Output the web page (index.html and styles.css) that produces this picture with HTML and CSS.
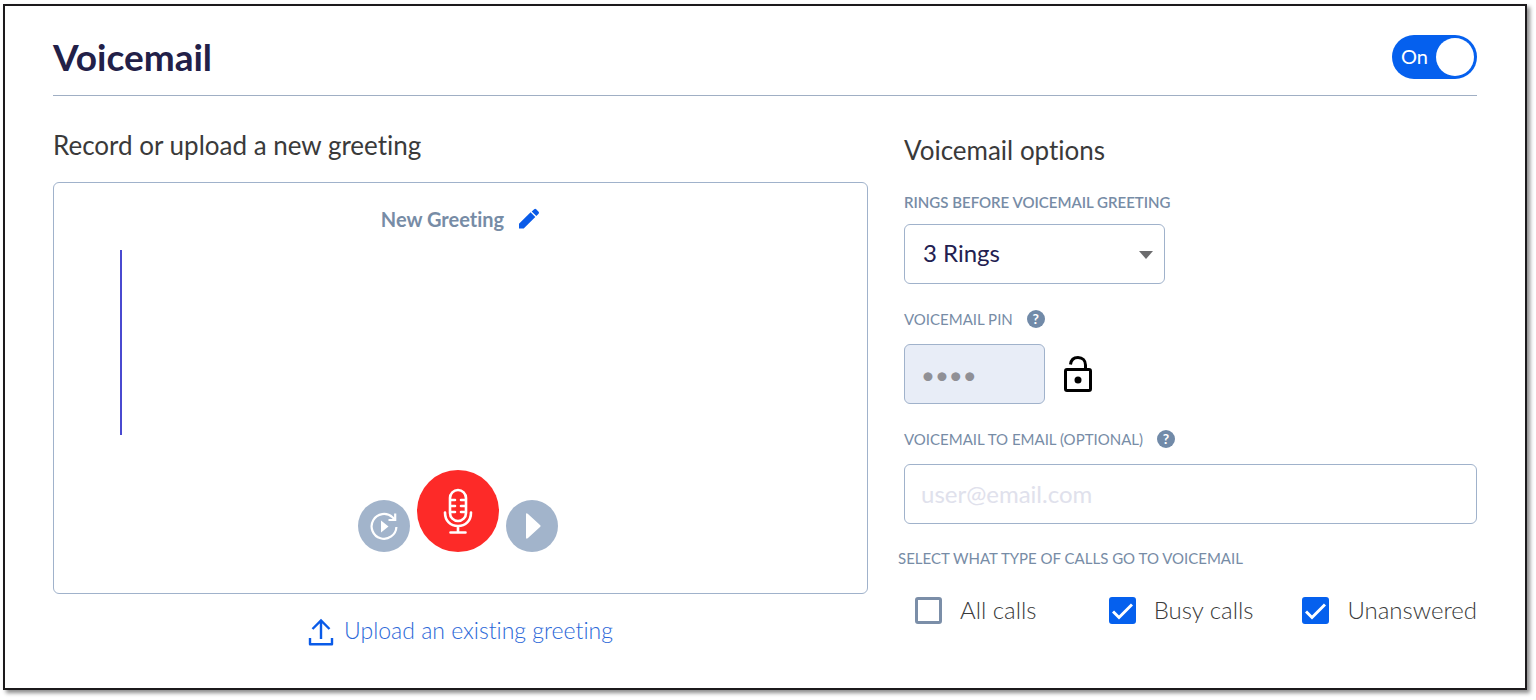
FILE: index.html
```html
<!DOCTYPE html>
<html lang="en">
<head>
<meta charset="utf-8">
<meta name="viewport" content="width=device-width, initial-scale=1">
<title>Voicemail</title>
<link rel="stylesheet" href="styles.css">
</head>
<body>
<main class="panel">
  <header class="panel-header">
    <h1 class="title">Voicemail</h1>
    <label class="toggle">
      <input class="toggle-input" type="checkbox" role="switch" aria-label="Voicemail" checked>
      <span class="toggle-text">On</span>
      <span class="toggle-knob"></span>
    </label>
  </header>

  <div class="columns">
    <section class="greeting">
      <h2 class="section-title">Record or upload a new greeting</h2>
      <div class="recorder">
        <div class="recorder-name">
          <span>New Greeting</span>
          <button class="icon-button" type="button" aria-label="Rename greeting">
            <svg width="22" height="22" viewBox="0 0 22 22" fill="#0a5be8"><path d="M1 15.800V20.500h4.700L17.300 9l-4.700-4.700zM18.300 8l2.300-2.300a1.500 1.500 0 0 0 0-2L18.200 1.300a1.500 1.500 0 0 0-2 0L13.700 3.400z"/></svg>
          </button>
        </div>
        <div class="waveform"></div>
        <div class="controls">
          <button class="round" type="button" aria-label="Replay">
            <svg width="30" height="30" viewBox="0 0 30 30" fill="none" stroke="#fff" stroke-width="2.200"><path d="M27.400 16A12.400 12.400 0 1 1 23.500 6.300L26 8.800"/><path d="M26.200 2.500V9H19.500"/><path d="M12 9.500l7.500 6-7.500 6z" fill="#fff" stroke="none"/></svg>
          </button>
          <button class="round round-record" type="button" aria-label="Record">
            <svg width="30" height="46" viewBox="0 0 30 46" fill="none" stroke="#fff" stroke-width="2.600" stroke-linecap="round"><rect x="7" y="2" width="16" height="31" rx="8"/><path d="M2 24.500C2 33 7.500 38 15 38s13-5 13-13.500M15 38v6M7.500 44.500h15"/><path d="M8 12h4M8 18h4M8 24h4M18 12h4M18 18h4M18 24h4"/></svg>
          </button>
          <button class="round" type="button" aria-label="Play">
            <svg width="18" height="28" viewBox="0 0 18 28" fill="#fff"><path d="M3 2.500Q3 .5 5 2L17 13q1.200 1 0 2L5 26Q3 27.500 3 25.500z"/></svg>
          </button>
        </div>
      </div>
      <a class="upload" href="#">
        <svg width="26" height="32" viewBox="0 0 26 32" fill="none" stroke="#0a5be8" stroke-width="2.400"><path d="M13 25V6.500M4.500 15L13 6.500 21.500 15"/><path d="M2 24v6.300h22V24" stroke-linejoin="round"/></svg>
        <span>Upload an existing greeting</span>
      </a>
    </section>

    <section class="options">
      <h2 class="section-title">Voicemail options</h2>

      <div class="field">
        <label class="field-label field-label-strong" for="rings">RINGS BEFORE VOICEMAIL GREETING</label>
        <div class="select-wrap">
          <select class="control select" id="rings">
            <option>3 Rings</option>
            <option>4 Rings</option>
            <option>5 Rings</option>
          </select>
          <svg class="select-arrow" width="14" height="8" viewBox="0 0 14 8" fill="#6c6c6e"><path d="M0 0h14L7 8z"/></svg>
        </div>
      </div>

      <div class="field">
        <div class="label-row">
          <label class="field-label" for="pin">VOICEMAIL PIN</label>
          <button class="help" type="button" aria-label="About the PIN">?</button>
        </div>
        <div class="pin-row">
          <input class="control pin" id="pin" type="password" value="1234" readonly>
          <button class="icon-button" type="button" aria-label="Unlock PIN">
            <svg width="30" height="38" viewBox="0 0 30 38" fill="none" stroke="#000" stroke-width="3"><rect x="2.500" y="14.500" width="25" height="21" rx="1.500"/><path d="M7.500 9.500C8 5 11 2.500 15 2.500c4.500 0 7.500 3 7.500 7.500v4.500"/><circle cx="15" cy="25" r="3.500" fill="#000" stroke="none"/></svg>
          </button>
        </div>
      </div>

      <div class="field">
        <div class="label-row">
          <label class="field-label" for="email">VOICEMAIL TO EMAIL (OPTIONAL)</label>
          <button class="help" type="button" aria-label="About voicemail to email">?</button>
        </div>
        <input class="control email" id="email" type="email" placeholder="user@email.com">
      </div>

      <fieldset class="calls">
        <legend class="field-label calls-legend">SELECT WHAT TYPE OF CALLS GO TO VOICEMAIL</legend>
        <div class="checks">
          <label class="check"><input class="check-box" type="checkbox"><span>All calls</span></label>
          <label class="check"><input class="check-box" type="checkbox" checked><span>Busy calls</span></label>
          <label class="check"><input class="check-box" type="checkbox" checked><span>Unanswered</span></label>
        </div>
      </fieldset>
    </section>
  </div>
</main>
</body>
</html>
```

FILE: styles.css
```css
* {
  box-sizing: border-box;
}

body {
  margin: 0;
  padding: 4px 9px 10px 3px;
  background: #fff;
  color: #3a3a3a;
  font-family: Lato, "Liberation Sans", sans-serif;
  font-variant-ligatures: none;
}

button,
input,
select {
  margin: 0;
  font-family: inherit;
}

svg {
  display: block;
}

.panel {
  padding: 29px 48px 42px;
  border: 2px solid #1c1a1c;
  background: #fff;
  box-shadow: 3px 3px 4px rgba(0, 0, 0, 0.45);
}

.panel-header {
  display: flex;
  align-items: center;
  justify-content: space-between;
  padding-bottom: 16px;
  border-bottom: 1px solid #a0afc4;
}

.title {
  margin: 0;
  color: #222048;
  font-size: 37px;
  line-height: 44px;
  font-weight: 700;
}

.toggle {
  position: relative;
  display: flex;
  align-items: center;
  justify-content: space-between;
  width: 85px;
  height: 44px;
  padding: 0 3px 0 9px;
  border-radius: 22px;
  background: #0560ee;
  color: #fff;
  font-size: 20px;
  cursor: pointer;
}

.toggle-input {
  position: absolute;
  inset: 0;
  width: 100%;
  height: 100%;
  margin: 0;
  opacity: 0;
}

.toggle-text {
  padding-bottom: 2px;
}

.toggle-knob {
  width: 38px;
  height: 38px;
  border-radius: 50%;
  background: #fff;
}

.columns {
  display: grid;
  grid-template-columns: 815fr 573fr;
  gap: 36px;
}

.greeting {
  padding-top: 33px;
}

.options {
  padding-top: 38px;
}

.section-title {
  margin: 0;
  font-size: 26px;
  line-height: 32px;
  font-weight: 400;
}

.recorder {
  display: flex;
  flex-direction: column;
  margin-top: 21px;
  padding: 24px 66px 41px;
  border: 1px solid #a0b2cb;
  border-radius: 6px;
}

.recorder-name {
  display: flex;
  align-items: center;
  justify-content: center;
  gap: 14px;
  color: #778ca6;
  font-size: 20px;
  line-height: 24px;
  font-weight: 700;
}

.icon-button {
  padding: 0;
  border: 0;
  background: none;
  cursor: pointer;
}

.waveform {
  height: 185px;
  margin-top: 19px;
  border-left: 2px solid #4a4ad0;
}

.controls {
  display: flex;
  align-items: flex-end;
  justify-content: center;
  gap: 7px;
  margin-top: 35px;
  padding-right: 6px;
}

.round {
  display: flex;
  align-items: center;
  justify-content: center;
  width: 52px;
  height: 52px;
  padding: 0;
  border: 0;
  border-radius: 50%;
  background: #a2b4cb;
  cursor: pointer;
}

.round-record {
  width: 82px;
  height: 82px;
  background: #fd2a28;
}

.upload {
  display: flex;
  align-items: center;
  justify-content: center;
  gap: 10px;
  margin-top: 20px;
  color: #2b68d8;
  font-size: 23px;
  line-height: 32px;
  font-weight: 300;
  text-decoration: none;
}

.field-label {
  color: #778ca6;
  font-size: 15px;
  line-height: 20px;
}

.field-label-strong {
  font-weight: 600;
}

.field {
  display: flex;
  flex-direction: column;
  gap: 12px;
  margin-top: 26px;
}

.field + .field {
  gap: 15px;
  margin-top: 25px;
}

.label-row {
  display: flex;
  align-items: center;
  gap: 14px;
}

.help {
  width: 18px;
  height: 18px;
  padding: 0;
  border: 0;
  border-radius: 50%;
  background: #718aa8;
  color: #fff;
  font-size: 14px;
  line-height: 18px;
  font-weight: 700;
}

.control {
  height: 60px;
  padding: 0 16px 2px;
  border: 1px solid #a0b2cb;
  border-radius: 6px;
  background: #fff;
  color: #222050;
  font-size: 24px;
}

.select-wrap {
  position: relative;
  width: 261px;
}

.select {
  width: 100%;
  padding: 0 18px 4px;
  appearance: none;
}

.select-arrow {
  position: absolute;
  top: 27px;
  right: 12px;
  pointer-events: none;
}

.pin-row {
  display: flex;
  align-items: center;
  gap: 18px;
}

.pin {
  width: 141px;
  padding-bottom: 0;
  background: #e8edf7;
  color: #909096;
}

.email {
  width: 100%;
}

.email::placeholder {
  color: #e0e1ec;
}

.calls {
  min-width: 0;
  margin: 24px 0 0;
  padding: 0;
  border: 0;
}

.calls-legend {
  padding: 0;
  margin-left: -6px;
}

.checks {
  display: grid;
  grid-template-columns: 195fr 195fr 172fr;
  margin-top: 26px;
  padding-left: 11px;
}

.check {
  display: flex;
  align-items: center;
  gap: 18px;
  font-size: 24px;
  line-height: 32px;
  font-weight: 300;
}

.check-box {
  flex: none;
  width: 27px;
  height: 27px;
  border: 3px solid #7b8ea8;
  border-radius: 3px;
  background: #fff;
  appearance: none;
}

.check-box:checked {
  border-color: #0560ee;
  background: #0560ee url("data:image/svg+xml,%3Csvg xmlns='http://www.w3.org/2000/svg' viewBox='0 0 21 21'%3E%3Cpath d='M1 11.500l6 6L20 4.500' fill='none' stroke='%23fff' stroke-width='3'/%3E%3C/svg%3E") center / 21px 21px no-repeat;
}
```
